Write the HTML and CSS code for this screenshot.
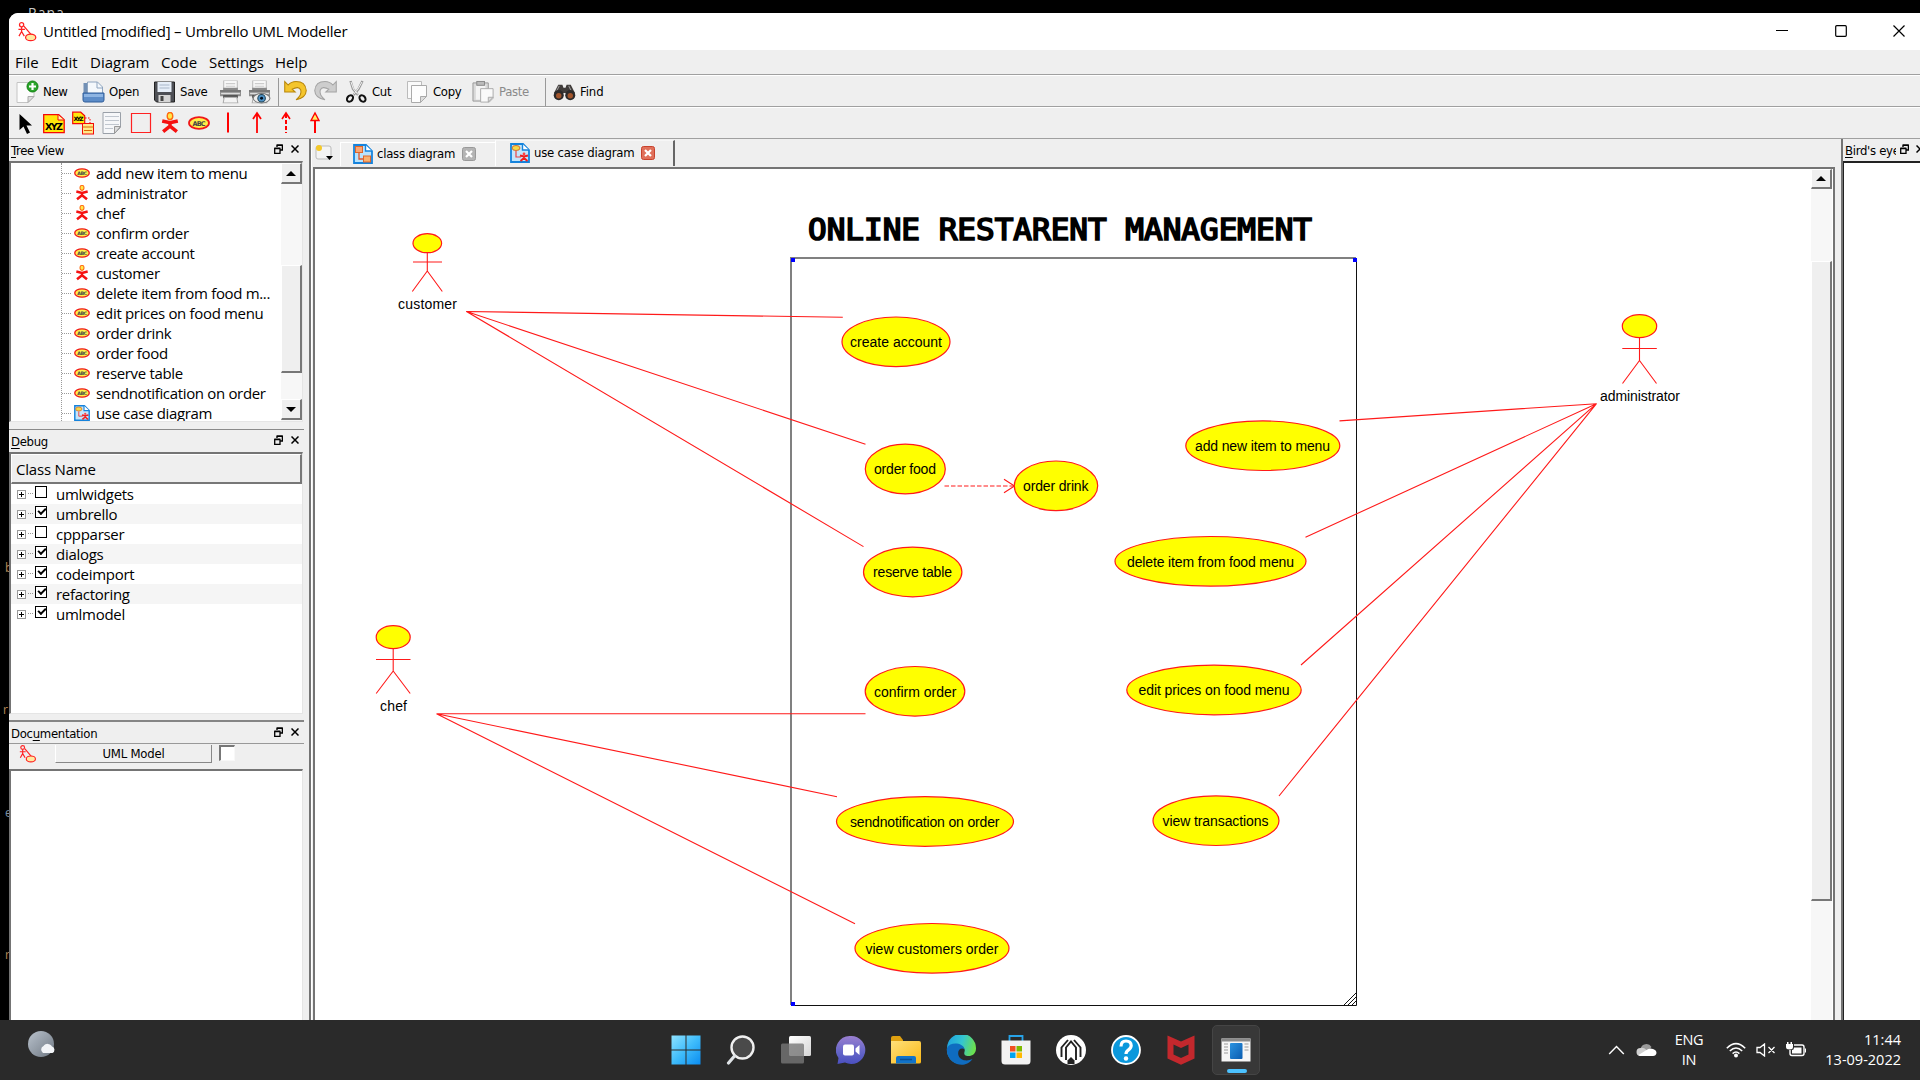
FILE: index.html
```html
<!DOCTYPE html>
<html lang="en">
<head>
<meta charset="utf-8">
<title>Untitled [modified] – Umbrello UML Modeller</title>
<link rel="stylesheet" href="styles.css">
</head>
<body>
<svg class="defs" aria-hidden="true">
  <defs>
    <linearGradient id="gWin" x1="0" y1="0" x2="1" y2="1"><stop offset="0" stop-color="#8fe3ff"/><stop offset=".5" stop-color="#3fbcfb"/><stop offset="1" stop-color="#0a8cf0"/></linearGradient>
    <linearGradient id="gChat" x1="0" y1="0" x2="0" y2="1"><stop offset="0" stop-color="#9a7fd0"/><stop offset=".6" stop-color="#6264c7"/><stop offset="1" stop-color="#4b50c0"/></linearGradient>
    <linearGradient id="gFold" x1="0" y1="0" x2="1" y2="1"><stop offset="0" stop-color="#ffe07a"/><stop offset="1" stop-color="#fbb917"/></linearGradient>
    <linearGradient id="gEdge" x1="0" y1="0" x2="1" y2=".3"><stop offset="0" stop-color="#1b9de2"/><stop offset=".55" stop-color="#34c5d0"/><stop offset="1" stop-color="#6be04f"/></linearGradient>
    <linearGradient id="gSky" x1="0" y1="0" x2="1" y2="1"><stop offset="0" stop-color="#b9c2cc"/><stop offset="1" stop-color="#6f7883"/></linearGradient>
    <linearGradient id="gGlass" x1="0" y1="0" x2="1" y2="1"><stop offset="0" stop-color="#ffffff"/><stop offset="1" stop-color="#d5d5d5"/></linearGradient>
    <linearGradient id="gApp" x1="0" y1="0" x2="1" y2="1"><stop offset="0" stop-color="#2b93e0"/><stop offset="1" stop-color="#0a5cb0"/></linearGradient>
  </defs>
  <symbol id="uml" viewBox="0 0 20 22">
    <g fill="none" stroke="#f22" stroke-width="1.4"><circle cx="3.5" cy="3" r="2.3"/><path d="M3.5 5.5v5M0 8.2h7.2M3.5 10.5L.6 15.5M3.5 10.5l3 5M6 4.5l8.5 10"/><ellipse cx="13.5" cy="17" rx="5.6" ry="3.6" fill="#ffe9a0"/></g>
  </symbol>
  <symbol id="usecase" viewBox="0 0 22 14">
    <ellipse cx="11" cy="7" rx="10" ry="5.8" fill="#fff04a" stroke="#f01818" stroke-width="1.8"/>
    <text x="11" y="9.5" font-size="6.500" font-weight="700" text-anchor="middle" textLength="13" fill="#444">ABC</text>
  </symbol>
  <symbol id="actor" viewBox="0 0 20 24">
    <ellipse cx="10" cy="4.3" rx="3" ry="3.8" fill="#ffe94a" stroke="#ff6a10" stroke-width="1.6"/>
    <path d="M1.5 9.8l8.5 2 8.500-2M10 11v5M10 15.500L2.500 21.500M10 15.500l7.500 6" fill="none" stroke="#f51111" stroke-width="3.8"/>
  </symbol>
  <symbol id="classDoc" viewBox="0 0 20 20">
    <path d="M1 1h12l6 6v12H1z" fill="#b9e2fb" stroke="#1583dc" stroke-width="1.8"/><path d="M12.500 1v6H19" fill="#fff" stroke="#1583dc" stroke-width="1.400"/>
    <path d="M6 8v7h5" fill="none" stroke="#e0562b" stroke-width="1.300"/><rect x="2.500" y="2.500" width="7" height="6" fill="#f9a774" stroke="#e0662b"/><rect x="10.500" y="12" width="7" height="6" fill="#f9b06e" stroke="#e0662b"/>
  </symbol>
  <symbol id="caseDoc" viewBox="0 0 20 20">
    <path d="M1 1h12l6 6v12H1z" fill="#c4e6fb" stroke="#1583dc" stroke-width="1.8"/><path d="M12.500 1v6H19" fill="#fff" stroke="#1583dc" stroke-width="1.400"/>
    <ellipse cx="6" cy="5" rx="4" ry="2.500" fill="#f5d94a" stroke="#d8702b"/><path d="M6 8v6h5" fill="none" stroke="#e44" stroke-width="1.200"/>
    <path d="M10 12.500l4 1 4-1M14 13v2M14 15l-3.500 3M14 15l3.500 3" fill="none" stroke="#f02020" stroke-width="2"/><circle cx="14" cy="11" r="1.400" fill="#f44"/>
  </symbol>
  <symbol id="restore" viewBox="0 0 9 10"><path d="M3 3V1.200h5.400V6H6M3 1h5.500" fill="none" stroke="#000" stroke-width="1.400"/><path d="M.7 4.500h5.300v4.800H.7zM.5 4.200h5.600" fill="none" stroke="#000" stroke-width="1.300"/></symbol>
  <symbol id="x" viewBox="0 0 8 8"><path d="M.5.5l7 7M7.500.5l-7 7" stroke="#000" stroke-width="1.500"/></symbol>
  <symbol id="printer" viewBox="0 0 22 22">
    <rect x="4.500" y="0" width="13" height="9" fill="#f8f8f8" stroke="#bbb"/><path d="M6.500 3h9M6.500 5.500h9" stroke="#ccc"/><path d="M1 9h3V7h14v2h3v6H1z" fill="#8a8a8a"/><path d="M1 10h20" stroke="#666"/><path d="M2 12.500h18" stroke="#ddd" stroke-width="1.500"/><path d="M4 14h14v3H4z" fill="#444"/><path d="M5 16h12l1 5.500H4z" fill="#f3f3f3" stroke="#aaa"/>
  </symbol>
</svg>

<div class="desktop">
  <span class="behind b1">Rana</span><span class="behind b2">b</span><span class="behind b3">r</span><span class="behind b4">e</span><span class="behind b5">r</span>
  <main class="window">
    <header class="titlebar">
      <svg class="app-icon"><use href="#uml"/></svg>
      <h1>Untitled [modified] – Umbrello UML Modeller</h1>
      <div class="win-buttons">
        <svg viewBox="0 0 12 12"><path d="M0 5.500h12" stroke="#000" stroke-width="1"/></svg>
        <svg viewBox="0 0 12 12"><rect x=".7" y=".7" width="10.600" height="10.600" rx="1" fill="none" stroke="#000" stroke-width="1.200"/></svg>
        <svg viewBox="0 0 12 12"><path d="M.5.5l11 11M11.500.5l-11 11" stroke="#000" stroke-width="1.200"/></svg>
      </div>
    </header>

    <nav class="menubar"><span class="m1">File</span><span class="m2">Edit</span><span class="m3">Diagram</span><span class="m4">Code</span><span class="m5">Settings</span><span>Help</span></nav>

    <div class="toolbar main-tools">
      <div class="tool t-new"><svg viewBox="0 0 22 24"><path d="M.5 2.500h17v14l-6 6H.5z" fill="#fcfcfc" stroke="#c4c4c4"/><path d="M17.500 16.500h-6v6z" fill="#ddd" stroke="#aaa"/><circle cx="16" cy="6.500" r="5.500" fill="#2ba52b" stroke="#118011"/><path d="M16 3v7M12.500 6.500h7" stroke="#fff" stroke-width="2.200"/></svg>New</div>
      <div class="tool t-open"><svg viewBox="0 0 22 24"><path d="M1 3h9l2 3v12H1z" fill="#7290b5"/><path d="M5 2h10l5 5v8H5z" fill="#f4f8fc" stroke="#8ea4bf"/><path d="M14.500 2v6H20" fill="none" stroke="#8ea4bf"/><path d="M.5 13h21v7q0 2-2 2h-17q-2 0-2-2z" fill="#5c8cc8" stroke="#315f9b"/><path d="M1.500 14h19v3h-19z" fill="#8db4e2"/></svg>Open</div>
      <div class="tool t-save"><svg viewBox="0 0 22 24"><path d="M1 2h20v20H3l-2-2z" fill="#4d4f55" stroke="#222"/><rect x="4" y="2" width="14" height="10" fill="#e6eef8"/><path d="M6 5h10M6 8h10" stroke="#a8b6c8"/><rect x="5" y="15" width="12" height="7" fill="#d5d5d5"/><rect x="7" y="16" width="3" height="5" fill="#444"/></svg>Save</div>
      <div class="tool t-print"><svg viewBox="0 0 22 22"><use href="#printer"/></svg></div>
      <div class="tool t-preview"><svg viewBox="0 0 22 22"><use href="#printer"/><ellipse cx="13" cy="17" rx="8" ry="4.500" fill="#eee" stroke="#777"/><circle cx="13" cy="17" r="3.600" fill="#4f93c8" stroke="#245"/><circle cx="13" cy="17" r="1.400" fill="#012"/></svg></div>
      <i class="sep"></i>
      <div class="tool t-undo"><svg viewBox="0 0 22 22"><path d="M.7 1v10h10L7.800 8.300Q14 5 16 9q1.500 4.500-4.500 9.500Q21 16.500 21.300 9.500 20.500 1 11.500 1 7 1 4 4.300z" fill="#f4c52c" stroke="#b8860b"/></svg></div>
      <div class="tool t-redo"><svg viewBox="0 0 22 22"><path d="M21.300 1v10h-10l2.900-2.700Q8 5 6 9q-1.500 4.500 4.500 9.500Q1 16.500.7 9.500 1.500 1 10.500 1 15 1 18 4.300z" fill="#cdcdcd" stroke="#a4a4a4"/></svg></div>
      <div class="tool t-cut"><svg viewBox="0 0 22 24"><path d="M5 1l2.500 8 5 6M17 1l-4 8-5 6" fill="none" stroke="#999" stroke-width="2.400"/><path d="M5.500 2l2.500 7 4.500 5.500M16.500 2l-4 7-4.500 5.500" fill="none" stroke="#f3f3f3" stroke-width="1"/><ellipse cx="4.500" cy="18.500" rx="2.700" ry="3.500" transform="rotate(40 4.500 18.500)" fill="none" stroke="#111" stroke-width="2"/><ellipse cx="17" cy="18.500" rx="2.700" ry="3.500" transform="rotate(-40 17 18.500)" fill="none" stroke="#111" stroke-width="2"/></svg>Cut</div>
      <div class="tool t-copy"><svg viewBox="0 0 22 24"><path d="M1 1.500h14v17H1z" fill="#fafafa" stroke="#bbb"/><path d="M5 5.500h15v11l-6 6H5z" fill="#fdfdfd" stroke="#aaa"/><path d="M20 16.500h-6v6z" fill="#ddd" stroke="#aaa"/></svg>Copy</div>
      <div class="tool t-paste"><svg viewBox="0 0 24 24"><path d="M1 2.500h16v19H1z" fill="#d9d9d9" stroke="#999"/><rect x="4" y="5" width="10" height="15" fill="#f4f4f4"/><rect x="5" y="1" width="8" height="4" fill="#bbb" stroke="#888"/><path d="M9 8.500h13v10l-4 4H9z" fill="#fafafa" stroke="#aaa"/><path d="M22 17.500h-5v5z" fill="#ddd" stroke="#aaa"/></svg>Paste</div>
      <i class="sep"></i>
      <div class="tool t-find"><svg viewBox="0 0 22 22"><path d="M5 4h4l1 3h2l1-3h4l4 8H1z" fill="#403c3a"/><path d="M6 5l-3 6M15 5l3 6" stroke="#999"/><circle cx="5.500" cy="14" r="4.800" fill="#2c2a2a"/><circle cx="16.500" cy="14" r="4.800" fill="#2c2a2a"/><circle cx="5.500" cy="14.500" r="2.600" fill="#a2552c"/><circle cx="16.500" cy="14.500" r="2.600" fill="#a2552c"/></svg>Find</div>
    </div>

    <div class="toolbar draw-tools">
      <svg viewBox="0 0 22 24"><path d="M5.500 3v16l4-3.500L13 23l3-1.500-3.500-7H18z" fill="#000"/></svg>
      <svg viewBox="0 0 22 24"><path d="M.7 3.700h15l5.500 5v13H.7z" fill="#ffe70a" stroke="#f40808" stroke-width="1.300"/><path d="M15 4v5h6" fill="#fff9b0" stroke="#f40808"/><text x="11" y="19" text-anchor="middle" font-size="9.500" font-weight="700" textLength="18">XYZ</text></svg>
      <svg viewBox="0 0 22 24"><path d="M13 7h5v5" fill="none" stroke="#f00" stroke-dasharray="1.500 1.500"/><path d="M.7 1.200h8l4 3.500v8H.7z" fill="#ffe70a" stroke="#f40808" stroke-width="1.200"/><text x="6.500" y="10" text-anchor="middle" font-size="6" font-weight="700" textLength="10">XYZ</text><rect x="10.500" y="12.500" width="11" height="10.500" fill="#ffe98a" stroke="#f40808"/><path d="M10.500 16h11M12 19.500h8" stroke="#d60"/></svg>
      <svg viewBox="0 0 22 24"><path d="M2 1.500h17.500v15l-6 6H2z" fill="#f6f7f9" stroke="#9aa0a8"/><path d="M4 5.500h14M4 9.500h14M4 13.500h14M4 17.500h8" stroke="#c0c6ce"/><path d="M19.500 15.500h-6v7z" fill="#ddd" stroke="#999"/></svg>
      <svg viewBox="0 0 22 24"><path d="M1.500 2.500h19v19h-19z" fill="none" stroke="#f22" stroke-width="1.200"/></svg>
      <svg viewBox="0 0 22 24"><use href="#actor" x="1" y="1" width="20" height="22"/></svg>
      <svg viewBox="0 0 22 24"><use href="#usecase" x="0" y="5" width="22" height="14"/></svg>
      <svg viewBox="0 0 22 24"><path d="M11 1.500v20" stroke="#f00" stroke-width="2"/></svg>
      <svg viewBox="0 0 22 24"><path d="M11 2v20M7 8l4-6 4 6" fill="none" stroke="#f00" stroke-width="1.800"/></svg>
      <svg viewBox="0 0 22 24"><path d="M7 8l4-6 4 6" fill="none" stroke="#f00" stroke-width="1.600"/><path d="M11 3v19" stroke="#f00" stroke-width="2" stroke-dasharray="4 2"/></svg>
      <svg viewBox="0 0 22 24"><path d="M11 10v12" stroke="#f00" stroke-width="2"/><path d="M7 9.500l4-7.500 4 7.500z" fill="#ffef60" stroke="#f00" stroke-width="1.400"/></svg>
    </div>

    <section class="work">
      <aside class="docks">
        <div class="dock-head h-tree"><span><u>T</u>ree View</span><svg class="rst"><use href="#restore"/></svg><svg class="cls"><use href="#x"/></svg></div>
        <div class="frame tree">
          <ul>
            <li><svg><use href="#usecase"/></svg>add new item to menu</li>
            <li><svg><use href="#actor"/></svg>administrator</li>
            <li><svg><use href="#actor"/></svg>chef</li>
            <li><svg><use href="#usecase"/></svg>confirm order</li>
            <li><svg><use href="#usecase"/></svg>create account</li>
            <li><svg><use href="#actor"/></svg>customer</li>
            <li><svg><use href="#usecase"/></svg>delete item from food m...</li>
            <li><svg><use href="#usecase"/></svg>edit prices on food menu</li>
            <li><svg><use href="#usecase"/></svg>order drink</li>
            <li><svg><use href="#usecase"/></svg>order food</li>
            <li><svg><use href="#usecase"/></svg>reserve table</li>
            <li><svg><use href="#usecase"/></svg>sendnotification on order</li>
            <li><svg><use href="#caseDoc"/></svg>use case diagram</li>
          </ul>
          <div class="scroll"><b class="btn"><i class="up"></i></b><span class="s1"></span><b class="thumb"></b><span class="s2"></span><b class="btn"><i class="down"></i></b></div>
        </div>
        <div class="dock-head h-debug"><span><u>D</u>ebug</span><svg class="rst"><use href="#restore"/></svg><svg class="cls"><use href="#x"/></svg></div>
        <div class="frame debug">
          <div class="col-head">Class Name</div>
          <ul>
            <li><i class="plus"></i><i class="box"></i>umlwidgets</li>
            <li><i class="plus"></i><i class="box on"></i>umbrello</li>
            <li><i class="plus"></i><i class="box"></i>cppparser</li>
            <li><i class="plus"></i><i class="box on"></i>dialogs</li>
            <li><i class="plus"></i><i class="box on"></i>codeimport</li>
            <li><i class="plus"></i><i class="box on"></i>refactoring</li>
            <li><i class="plus"></i><i class="box on"></i>umlmodel</li>
          </ul>
        </div>
        <div class="dock-head h-doc"><span>Doc<u>u</u>mentation</span><svg class="rst"><use href="#restore"/></svg><svg class="cls"><use href="#x"/></svg></div>
        <div class="doc-bar"><svg><use href="#uml"/></svg><span class="model">UML Model</span><i class="check"></i></div>
        <div class="frame doc"></div>
      </aside>

      <section class="center">
        <div class="tabs">
          <div class="corner"><svg viewBox="0 0 20 18"><rect x="1" y="2" width="15" height="13" rx="2" fill="#f4f4f4" stroke="#bbb"/><circle cx="4" cy="4" r="3" fill="#f5c928"/><path d="M11 12h7l-3.500 4z" fill="#000"/></svg></div>
          <div class="tab"><svg class="ti"><use href="#classDoc"/></svg><span>class diagram</span><svg class="tc" viewBox="0 0 14 14"><rect x=".5" y=".5" width="13" height="13" rx="2" fill="#b4b4b4" stroke="#999"/><path d="M4 4l6 6M10 4l-6 6" stroke="#fff" stroke-width="2.200"/></svg></div>
          <div class="tab active"><svg class="ti"><use href="#caseDoc"/></svg><span>use case diagram</span><svg class="tc" viewBox="0 0 14 14"><rect x=".5" y=".5" width="13" height="13" rx="2" fill="#e0705a" stroke="#c8412c"/><path d="M4 4l6 6M10 4l-6 6" stroke="#fff" stroke-width="2.200"/></svg></div>
        </div>
        <div class="view">
          <svg class="diagram" viewBox="315 169 1496 851">
            <text class="heading" x="808" y="240" textLength="504" lengthAdjust="spacingAndGlyphs">ONLINE RESTARENT MANAGEMENT</text>
            <g class="bound"><path class="soft" d="M791 1005V258H1356"/><path d="M1356.500 258V1005.500H791"/><path class="grip" d="M1344 1005l12-12M1348 1005l8-8M1352 1005l4-4"/></g>
            <g class="handles"><rect x="791" y="258" width="4" height="4"/><rect x="1353" y="258" width="4" height="4"/><rect x="791" y="1002" width="4" height="4"/></g>
            <g class="links">
              <path d="M466.500 311.500L842.800 317.300M466.500 311.500L865.500 444.300M466.500 311.500L863.500 546.600"/>
              <path d="M436.500 713.800H865.500M436.500 713.800L837 796.700M436.500 713.800L855 923.700"/>
              <path d="M1596.500 403.700L1339.500 420.900M1596.500 403.700L1305.500 537.300M1596.500 403.700L1301 665M1596.500 403.700L1279 796"/>
              <path stroke-dasharray="4.500 2" d="M944.500 486H1014"/><path d="M1004 479.300l10.500 6.700-10.500 6.700"/>
            </g>
            <g class="actors">
              <ellipse cx="427.300" cy="243.200" rx="14.300" ry="9.500"/><path d="M427.300 252.700V271M413 262h29M427.300 271l-15 20.500M427.300 271l15 20.500"/>
              <ellipse cx="393.200" cy="637.200" rx="17" ry="11.500"/><path d="M393.200 648.700V671M376 659.500h34.500M393.200 671l-17 22.500M393.200 671l17 22.500"/>
              <ellipse cx="1639.500" cy="326.200" rx="17.200" ry="11.500"/><path d="M1639.500 337.700V360.500M1622.300 348.500h34.500M1639.500 360.500l-17 23M1639.500 360.500l17 23"/>
            </g>
            <g class="cases">
              <ellipse cx="896" cy="341.800" rx="54" ry="24.800"/><ellipse cx="905.300" cy="469" rx="40" ry="24.800"/>
              <ellipse cx="1056" cy="485.800" rx="41.700" ry="24.800"/><ellipse cx="1262.800" cy="445.700" rx="77" ry="24.800"/>
              <ellipse cx="1210.500" cy="561.300" rx="95.500" ry="24.800"/><ellipse cx="1214" cy="690" rx="87.200" ry="24.800"/>
              <ellipse cx="1216" cy="820.700" rx="63" ry="24.800"/><ellipse cx="912.700" cy="572" rx="49.200" ry="24.800"/>
              <ellipse cx="915" cy="691.300" rx="49.800" ry="24.800"/><ellipse cx="925" cy="821.500" rx="88.500" ry="24.800"/>
              <ellipse cx="932" cy="948.300" rx="77" ry="24.800"/>
            </g>
            <g class="names">
              <text x="398" y="309" textLength="59">customer</text><text x="380" y="711" textLength="27">chef</text><text x="1600" y="401" textLength="80">administrator</text>
              <text x="850" y="346.700" textLength="92">create account</text><text x="874" y="474" textLength="62">order food</text>
              <text x="1023" y="491" textLength="65.500">order drink</text><text x="1195" y="451" textLength="135">add new item to menu</text>
              <text x="1127" y="567" textLength="167">delete item from food menu</text><text x="1138.500" y="695" textLength="151">edit prices on food menu</text>
              <text x="1162.500" y="826" textLength="106">view transactions</text><text x="873" y="577" textLength="79">reserve table</text>
              <text x="874" y="697" textLength="82.500">confirm order</text><text x="850" y="827" textLength="149.500">sendnotification on order</text>
              <text x="865.500" y="954" textLength="133">view customers order</text>
            </g>
          </svg>
          <div class="scroll canvas-scroll"><b class="btn"><i class="up"></i></b><span class="s1"></span><b class="thumb"></b><span class="s2"></span></div>
        </div>
      </section>

      <aside class="bird">
        <div class="dock-head"><span><u>B</u>ird's eye</span><svg class="rst"><use href="#restore"/></svg><svg class="cls"><use href="#x"/></svg></div>
        <div class="bird-view"></div>
      </aside>
    </section>
  </main>

  <footer class="taskbar">
    <svg class="weather" viewBox="0 0 28 28"><circle cx="13" cy="13" r="13" fill="url(#gSky)"/><path d="M15 22a4 4 0 0 1 .5-7 5 5 0 0 1 8.500.5 3.500 3.500 0 0 1 .5 6.500z" fill="#f2f4f7"/></svg>
    <div class="apps">
      <span><svg viewBox="0 0 30 30"><path d="M.5.500h14v14H.5zM15.500.5h14v14h-14zM.5 15.500h14v14H.5zM15.500 15.500h14v14h-14z" fill="url(#gWin)"/></svg></span>
      <span><svg viewBox="0 0 30 30"><circle cx="16.500" cy="12.500" r="11" fill="#4a4a4a" stroke="#f0f0f0" stroke-width="2.400"/><path d="M8.500 21L2.500 28" stroke="#dfe3e6" stroke-width="3.200" stroke-linecap="round"/></svg></span>
      <span><svg viewBox="0 0 30 30"><rect x="8" y="1" width="22" height="20" rx="1.500" fill="url(#gGlass)"/><rect x="0" y="8.500" width="23" height="20" rx="1.500" fill="#777" fill-opacity=".8"/></svg></span>
      <span><svg viewBox="0 0 30 30"><path d="M15 1a14 14 0 1 1-6 26.500L1.500 29l1-6A14 14 0 0 1 15 1z" fill="url(#gChat)"/><rect x="7" y="9.500" width="11" height="11" rx="2" fill="#fff"/><path d="M19.500 13.500l4-3.500v10l-4-3.500z" fill="#fff"/></svg></span>
      <span><svg viewBox="0 0 30 30"><path d="M0 3q0-2 2-2h7l3 4v5H0z" fill="#dfa010"/><path d="M0 6h28q2 0 2 2v19q0 1.500-2 1.500H0z" fill="url(#gFold)"/><path d="M5 28.500V23q0-2 2-2h16q2 0 2 2v5.500z" fill="#1173c9"/><path d="M9 24.500h12" stroke="#0a4f94" stroke-width="1.500"/></svg></span>
      <span><svg viewBox="0 0 30 30"><path d="M1 13A14.500 14.500 0 0 1 30 13.500c0 5-3.500 7.500-7.500 7.500-5 0-4.500-3-3.800-5 .8-5-8-6.500-11-1-2 3.500 0 10 6 13.700C6 28.500 0 21 1 13z" fill="url(#gEdge)"/><path d="M1 13c3-6.500 16-5.500 17.500 1-4-2-7.500 1.500-6 6.500 2 5.500 9 6 14 3.500C22 30 16 30.500 11 29 3.500 26.500 0 19 1 13z" fill="#0f6cc0"/></svg></span>
      <span><svg viewBox="0 0 30 30"><path d="M8.500 7V1h13v6" fill="none" stroke="#27a3e8" stroke-width="1.800"/><path d="M.5 5.500h29V26q0 3.500-3.500 3.500H4Q.5 29.500.5 26z" fill="#f2f2f2"/><path d="M9 11h5.500v5.500H9z" fill="#f25022"/><path d="M15.500 11H21v5.500h-5.500z" fill="#7fba00"/><path d="M9 17.500h5.500V23H9z" fill="#00a4ef"/><path d="M15.500 17.500H21V23h-5.500z" fill="#ffb900"/></svg></span>
      <span><svg viewBox="0 0 30 30"><circle cx="15" cy="15" r="15" fill="#fff"/><path d="M5.500 22V12.500L12 5M24.500 22V12.500L18 5M10 25V12.500l5-6 5 6V25" fill="none" stroke="#222" stroke-width="1.900"/><path d="M11.500 29v-3.500L15 22l3.500 3.500V29z" fill="#222"/></svg></span>
      <span><svg viewBox="0 0 30 30"><circle cx="15" cy="15" r="14" fill="#0b98dc" stroke="#fff" stroke-width="1.800"/><path d="M10 11.500q0-5.500 5-5.500t5.200 4.500q0 2.500-2.700 4.300-2.500 1.700-2.500 4.200" fill="none" stroke="#fff" stroke-width="3.200"/><circle cx="15" cy="23.500" r="2.200" fill="#fff"/></svg></span>
      <span><svg viewBox="0 0 30 30"><path d="M1.500.5L15 6.500 28.500.5v23L15 29.800 1.500 23.500z" fill="#c3282d"/><path d="M7.500 9.500L15 13l7.500-3.500v10L15 23l-7.500-3.500z" fill="#2b2b2b"/></svg></span>
      <span class="running"><svg viewBox="0 0 30 30"><rect x=".5" y="3.500" width="29" height="23" fill="#f6f6f6"/><path d="M.5 3.500h29v3H.5z" fill="#8a8a8a"/><rect x="9" y="8" width="12.500" height="16" rx="1" fill="url(#gApp)"/><path d="M3 9h4M3 12h4M3 15h4M3 18h4M23.500 9h4M23.500 12h4M23.500 15h4" stroke="#999" stroke-width="1.200"/></svg></span>
    </div>
    <div class="tray">
      <svg class="chev" viewBox="0 0 16 10"><path d="M.7 9L8 1.500 15.300 9" fill="none" stroke="#fff" stroke-width="1.400"/></svg>
      <svg class="cloud" viewBox="0 0 20 14"><path d="M4 6a6 6 0 0 1 11-2l-6 6z" fill="#9a9a9a"/><path d="M4 13a4 4 0 0 1 0-8q3-1 6 2l-3 6z" fill="#d0d0d0"/><path d="M2 12l8-5q3-2.500 6.500-1Q20 7 20 10q-.5 3-3.500 3H4q-1.500 0-2-1z" fill="#fff"/></svg>
      <span class="lang">ENG<br>IN</span>
      <svg class="wifi" viewBox="0 0 20 16"><path d="M.8 6.200Q10-3 19.200 6.200M3.800 9Q10 3 16.200 9M6.600 11.600Q10 8.500 13.400 11.600" fill="none" stroke="#fff" stroke-width="1.500"/><circle cx="10" cy="13.500" r="2" fill="#fff"/></svg>
      <svg class="mute" viewBox="0 0 20 14"><path d="M1 4.500h3L8.500 1v12L4 9.500H1zM12.500 4l6 6M18.500 4l-6 6" fill="none" stroke="#fff" stroke-width="1.300"/></svg>
      <svg class="batt" viewBox="0 0 20 16"><path d="M8 3h8q2 0 2 2v6.500q0 2-2 2H6q-2 0-2-2V8" fill="none" stroke="#fff" stroke-width="1.400"/><path d="M8 5.500h7.500v6H6V8q2 0 2-2.500zM19 6.500h1v4h-1zM0 2h7v3q0 2.500-3.500 2.500T0 5zM1 0h1.500v2H1zM4.500 0H6v2H4.500z" fill="#fff"/></svg>
      <span class="clock">11:44<br>13-09-2022</span>
    </div>
  </footer>
</div>
</body>
</html>
```
FILE: styles.css
```css
* { box-sizing: border-box; }
body { margin: 0; background: #000; font-family: "Open Sans", "Noto Sans", sans-serif; color: #000; }
ul { list-style: none; margin: 0; padding: 0; }
svg { display: block; flex: none; }
.defs { position: absolute; width: 0; height: 0; }
.defs text, .draw-tools text { font-family: "DejaVu Sans", sans-serif; }

.desktop { position: relative; width: 1920px; height: 1080px; overflow: hidden; display: flex; flex-direction: column; }
.behind { position: absolute; color: #c8c8c8; font-size: 12px; line-height: 12px; }
.b1 { left: 28px; top: 7px; font-size: 14px; letter-spacing: 1px; }
.b2 { left: 5px; top: 562px; color: #b98a5a; }
.b3 { left: 3px; top: 704px; color: #b98a5a; }
.b4 { left: 5px; top: 807px; color: #7b90a5; }
.b5 { left: 5px; top: 949px; color: #b98a5a; }

.window { position: relative; margin: 13px 0 0 9px; height: 1007px; background: #efefef; border-radius: 9px 0 0 0; overflow: hidden; display: flex; flex-direction: column; flex: none; }
.titlebar { height: 37px; flex: none; background: #fff; display: flex; align-items: center; }
.app-icon { width: 21px; height: 20px; margin: 0 5px 0 8px; }
.titlebar h1 { margin: 0; flex: 1; font-size: 15px; font-weight: 400; letter-spacing: -.24px; padding-bottom: 1px; }
.win-buttons { display: flex; gap: 46.500px; padding: 0 15px 1px 0; }
.win-buttons svg { width: 12px; height: 12px; }

.menubar { height: 26px; flex: none; border-bottom: 1px solid #fff; box-shadow: inset 0 -1px #a0a0a0; display: flex; align-items: center; padding: 0 0 1px 6px; font-size: 15px; letter-spacing: 0; }
.m1 { width: 36px; } .m2 { width: 39px; } .m3 { width: 71px; } .m4 { width: 48px; } .m5 { width: 66px; letter-spacing: -.1px; }

.toolbar { flex: none; display: flex; align-items: center; }
.main-tools { height: 32px; border-bottom: 1px solid #fff; box-shadow: inset 0 -1px #a0a0a0; padding-left: 8px; font: 13px "DejaVu Sans Condensed", "DejaVu Sans", sans-serif; font-stretch: condensed; letter-spacing: -.3px; }
.tool { display: flex; align-items: center; gap: 3px; white-space: nowrap; }
.tool svg { width: 23px; height: 24px; margin-left: -1px; margin-right: 1px; }
.sep { width: 1px; height: 28px; background: #999; }
.t-new { width: 66px; } .t-open { width: 71px; } .t-save { width: 66px; }
.t-print { width: 29px; } .t-preview { width: 29px; } .t-undo { width: 30px; padding-left: 6px; } .t-redo { width: 37px; padding-left: 6px; }
.t-cut { width: 61px; } .t-copy { width: 66px; } .t-paste { width: 72px; color: #8a8a8a; } .t-find { padding-left: 8px; letter-spacing: -.1px; }
.draw-tools { height: 31px; border-bottom: 1px solid #a0a0a0; gap: 7px; padding-left: 5px; }
.draw-tools svg { width: 22px; height: 24px; }

.work { flex: 1; display: flex; min-height: 0; }
.docks { width: 302px; border-right: 2px solid #747474; padding-right: 5px; display: flex; flex-direction: column; flex: none; }
.dock-head { display: flex; align-items: center; flex: none; padding-left: 2px; padding-right: 5px; font: 13px "DejaVu Sans Condensed", "DejaVu Sans", sans-serif; font-stretch: condensed; letter-spacing: -.3px; }
.dock-head span { flex: 1; }
.dock-head u { text-underline-offset: 2px; }
.rst { width: 9px; height: 10px; margin-right: 8px; margin-bottom: 3px; }
.cls { width: 8px; height: 8px; margin-bottom: 3px; }
.h-tree { height: 22px; }
.h-debug { height: 23px; margin-top: 7px; border-top: 1px solid #8a8a8a; padding-top: 1px; }
.h-doc { height: 24px; margin-top: 6px; border-top: 2px solid #858585; border-bottom: 1px solid #999; padding-top: 2px; }
.frame { background: #fff; border: 2px solid #747474; border-right: 1px solid #e5e5e5; border-bottom: 1px solid #e5e5e5; margin-right: 1px; flex: none; }
.tree { height: 261px; display: flex; overflow: hidden; font-size: 15px; }
.tree ul { flex: 1; height: 258px; overflow: hidden; margin-left: 50px; border-left: 1px dotted #999; }
.tree li { height: 20px; display: flex; align-items: center; white-space: nowrap; letter-spacing: -.33px; }
.tree li::before { content: ""; width: 9px; border-top: 1px dotted #999; margin-right: 3px; }
.tree li svg { width: 16px; height: 16px; margin-right: 6px; }
.scroll { width: 21px; flex: none; display: flex; flex-direction: column; background: #f7f7f7; }
.btn, .thumb { background: #efefef; border: 1px solid #fff; border-right: 2px solid #777; border-bottom: 2px solid #777; display: flex; align-items: center; justify-content: center; flex: none; }
.btn { height: 21px; }
.up { border: 5px solid transparent; border-top: 0; border-bottom: 5px solid #000; }
.down { border: 5px solid transparent; border-bottom: 0; border-top: 5px solid #000; }
.tree .s1 { height: 81px; } .tree .thumb { height: 108px; } .tree .s2 { height: 26px; }

.debug { height: 262px; font-size: 15px; }
.col-head { height: 30px; border: 1px solid #fff; border-right: 2px solid #777; border-bottom: 2px solid #777; background: #efefef; padding-left: 4px; line-height: 28px; letter-spacing: -.2px; }
.debug li { height: 20px; display: flex; align-items: center; padding-left: 6px; letter-spacing: -.28px; }
.debug li:nth-child(even) { background: #f5f5f5; }
.plus { width: 9px; height: 9px; border: 1px solid #999; background: linear-gradient(#000, #000) center / 5px 1px no-repeat, linear-gradient(#000, #000) center / 1px 5px no-repeat, #fff; margin-right: 2px; }
.plus + .box::before { content: ""; position: absolute; left: -8px; top: 6px; width: 5px; border-top: 1px dotted #999; }
.box { width: 12px; height: 12px; border: 1px solid #000; background: #fff; margin: 0 9px 4px 7px; position: relative; display: block; }
.box.on::after { content: ""; position: absolute; left: 2px; top: 1px; width: 6px; height: 3px; border: 2px solid #000; border-top: 0; border-right: 0; transform: rotate(-45deg); }
.doc-bar { height: 25px; flex: none; display: flex; align-items: flex-start; padding: 1px 0 0 10px; }
.doc-bar svg { width: 18px; height: 18px; margin-right: 18px; }
.model { width: 157px; height: 18px; border-right: 1px solid #888; border-bottom: 1px solid #888; border-left: 1px solid #fff; text-align: center; font: 13px/18px "DejaVu Sans Condensed", "DejaVu Sans", sans-serif; font-stretch: condensed; letter-spacing: -.2px; }
.check { width: 16px; height: 16px; margin: 0 0 0 7px; background: #fff; border: 1px solid #f8f8f8; border-top: 2px solid #777; border-left: 2px solid #777; }
.doc { flex: 1; border-bottom: 0; }

.center { width: 1530px; display: flex; flex-direction: column; flex: none; padding: 0 6px 0 1px; border-left: 1px solid #fff; }
.tabs { height: 28px; display: flex; font: 13px "DejaVu Sans Condensed", "DejaVu Sans", sans-serif; font-stretch: condensed; letter-spacing: -.25px; }
.corner { width: 27px; padding: 5px 0 0 2px; } .corner svg { width: 20px; height: 18px; }
.tab { width: 155px; height: 24px; margin-top: 3px; display: flex; align-items: center; padding: 0 0 2px 12px; border: 1px solid #fff; border-bottom: 0; border-right: 0; white-space: nowrap; }
.tab.active { width: 180px; height: 26px; margin-top: 1px; border-right: 2px solid #666; border-top-color: #f6f6f6; padding-left: 14px; }
.ti { width: 20px; height: 20px; margin-right: 4px; }
.tab span { width: 85px; } .tab.active span { width: 107px; letter-spacing: -.2px; }
.tc { width: 14px; height: 14px; }
.view { flex: 1; min-height: 0; display: flex; background: #fff; border: 2px solid #747474; border-bottom: 0; padding-right: 2px; }
.diagram { width: 1496px; height: 851px; }
.canvas-scroll .btn { height: 20px; }
.canvas-scroll .s1 { height: 72px; } .canvas-scroll .thumb { height: 640px; }

.heading { font: 29.500px "DejaVu Sans Mono", monospace; stroke: #000; stroke-width: 1.700px; }
.bound { fill: none; stroke: #111; stroke-width: 1; }
.bound .soft { stroke: #808080; stroke-width: 2; }
.handles { fill: #0000ff; }
.links, .actors path { fill: none; stroke: #ff1a1a; stroke-width: 1.1; }
.actors ellipse, .cases ellipse { fill: #ff0; stroke: #ff1a1a; stroke-width: 1.2; }
.names { font: 14px "Liberation Sans", Arial, sans-serif; }

.bird { flex: 1; min-width: 0; border-left: 2px solid #747474; display: flex; flex-direction: column; overflow: hidden; }
.bird .dock-head { height: 22px; padding-left: 2px; width: 84px; }
.bird .dock-head span { flex: none; width: 51px; overflow: hidden; white-space: nowrap; margin-right: 4px; }
.bird .rst { margin-right: 7px; }
.bird-view { flex: 1; background: #fff; border-top: 2px solid #222; border-left: 1px solid #222; }

.taskbar { height: 60px; flex: none; background: #2a2a2a; display: flex; align-items: center; position: relative; color: #fff; }
.weather { width: 28px; height: 28px; margin: -10px 0 0 28px; }
.apps { display: flex; margin-left: 602px; }
.apps span { width: 55px; height: 50px; display: flex; align-items: center; justify-content: center; }
.apps svg { width: 30px; height: 30px; }
.apps .running { width: 48px; margin-left: 3.500px; background: #383838; border: 1px solid #454545; border-radius: 5px; position: relative; }
.running::after { content: ""; position: absolute; left: 14px; bottom: 1px; width: 20px; height: 4px; border-radius: 2px; background: #4cc2ff; }
.tray { margin-left: auto; padding-right: 19px; display: flex; align-items: center; font-size: 14.500px; line-height: 20px; letter-spacing: 0; }
.chev { width: 17px; height: 10px; margin-right: 11px; } .cloud { width: 21px; height: 14px; margin-right: 15px; }
.lang { width: 34px; text-align: center; margin-right: 20px; letter-spacing: -.3px; }
.wifi { width: 20px; height: 16px; margin-right: 10px; } .mute { width: 20px; height: 14px; margin-right: 10px; } .batt { width: 20px; height: 16px; margin-right: 0; }
.clock { width: 95px; text-align: right; }
```
